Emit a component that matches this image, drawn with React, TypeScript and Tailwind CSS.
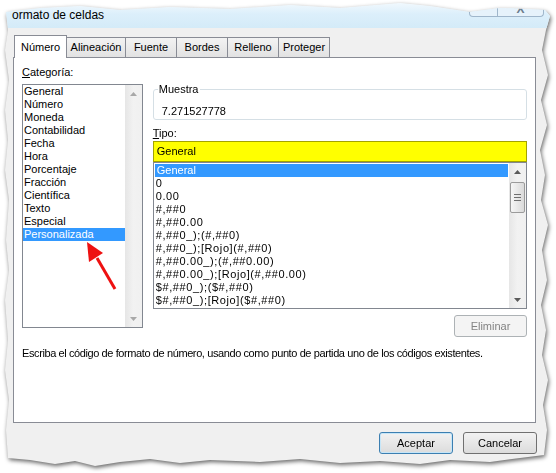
const cats = [
  'General',
  'Número',
  'Moneda',
  'Contabilidad',
  'Fecha',
  'Hora',
  'Porcentaje',
  'Fracción',
  'Científica',
  'Texto',
  'Especial',
  'Personalizada',
]

const tipos = [
  'General',
  '0',
  '0.00',
  '#,##0',
  '#,##0.00',
  '#,##0_);(#,##0)',
  '#,##0_);[Rojo](#,##0)',
  '#,##0.00_);(#,##0.00)',
  '#,##0.00_);[Rojo](#,##0.00)',
  '$#,##0_);($#,##0)',
  '$#,##0_);[Rojo]($#,##0)',
]

const tabs = [
  { label: 'Número', w: 'w-[53px]' },
  { label: 'Alineación', w: 'w-[60px]' },
  { label: 'Fuente', w: 'w-[52px]' },
  { label: 'Bordes', w: 'w-[52px]' },
  { label: 'Relleno', w: 'w-[52px]' },
  { label: 'Proteger', w: 'w-[52px]' },
]

function Arrow({ up, dim }: { up?: boolean; dim?: boolean }) {
  return (
    <div className="flex h-[17px] items-center justify-center">
      <svg width="7" height="4" viewBox="0 0 7 4">
        <polygon
          points={up ? '3.5,0 7,4 0,4' : '0,0 7,0 3.5,4'}
          fill={dim ? '#a8a8a8' : '#5a5a5a'}
        />
      </svg>
    </div>
  )
}

function ScrollBar({ thumb }: { thumb?: boolean }) {
  return (
    <div className="flex w-[17px] flex-col bg-linear-to-r from-[#e6e6e6] via-[#f2f2f2] to-[#f0f0f0]">
      <Arrow up dim={!thumb} />
      {thumb ? (
        <div className="mx-[1px] mt-[2px] flex h-[31px] flex-col items-center justify-center gap-[2px] rounded-[2px] border border-[#9b9b9b] bg-linear-to-r from-[#f6f6f6] to-[#dadada]">
          <div className="h-px w-[7px] bg-[#6f6f6f]" />
          <div className="h-px w-[7px] bg-[#6f6f6f]" />
          <div className="h-px w-[7px] bg-[#6f6f6f]" />
        </div>
      ) : null}
      <div className="flex-1" />
      <Arrow dim={!thumb} />
    </div>
  )
}

export default function App() {
  return (
    <div className="relative h-[473px] w-[556px] overflow-hidden bg-white font-['Liberation_Sans',Arial,sans-serif] text-[11px] text-black">
      <div className="drop-shadow-[1px_2px_2px_rgba(0,0,0,0.6)]">
        <div className="flex h-[473px] flex-col bg-[#f0f0f0] [clip-path:polygon(6px_12px,40px_8px,80px_6px,120px_10px,170px_7px,230px_9px,290px_5px,340px_8px,400px_3px,430px_6px,470px_12px,500px_8px,545px_10px,550px_16px,546px_30px,542px_50px,548px_75px,541px_100px,547px_125px,540px_150px,545px_175px,541px_200px,548px_225px,542px_250px,547px_280px,541px_305px,546px_330px,542px_355px,548px_380px,543px_405px,547px_430px,544px_455px,520px_458px,490px_462px,450px_460px,420px_464px,380px_461px,340px_463px,300px_459px,260px_462px,210px_460px,180px_463px,150px_459px,120px_462px,95px_466px,75px_461px,55px_464px,30px_460px,8px_458px,6px_430px,9px_400px,5px_370px,8px_340px,5px_300px,9px_270px,6px_240px,9px_200px,5px_170px,8px_140px,5px_110px,9px_80px,5px_50px,8px_30px)]">
          {/* title bar */}
          <div className="flex h-[28px] justify-between bg-linear-to-b from-[#f6fbfe] via-[#dceffb] to-[#d4ebf8]">
            <div className="pl-[12px] pt-[8px] text-[12px] leading-[14px]">ormato de celdas</div>
            <div className="mr-[12px] mt-[2px] flex h-[15px] rounded-b-[4px] border border-t-0 border-[#9fb6cb] bg-[#e6f2fb]">
              <div className="w-[28px] border-r border-[#9fb6cb]" />
              <div className="flex w-[45px] items-center justify-center text-[12px] font-bold leading-none text-[#6d7d8e]">X</div>
            </div>
          </div>

          {/* body */}
          <div className="flex flex-1 flex-col pl-[13px] pt-[7px]">
            <div className="flex h-[22px] items-end pl-[1px]">
              {tabs.map((t, i) =>
                i === 0 ? (
                  <div
                    key={t.label}
                    className={`relative z-10 -mb-px flex h-[23px] items-center justify-center border border-b-0 border-[#898c95] bg-white ${t.w}`}
                  >
                    {t.label}
                  </div>
                ) : (
                  <div
                    key={t.label}
                    className={`-ml-px flex h-[20px] items-center justify-center border border-b-0 border-[#898c95] bg-linear-to-b from-[#f3f3f3] to-[#e2e2e2] ${t.w}`}
                  >
                    {t.label}
                  </div>
                ),
              )}
            </div>

            <div className="flex h-[366px] w-[523px] flex-col border border-[#898c95] bg-white px-[8px] pt-[8px]">
              <div className="flex gap-[10px]">
                <div className="flex w-[121px] flex-col">
                  <div className="leading-[13px]">
                    <span className="underline">C</span>ategoría:
                  </div>
                  <div className="mt-[5px] flex h-[244px] border border-[#828790]">
                    <div className="flex-1">
                      {cats.map((c) => (
                        <div
                          key={c}
                          className={
                            c === 'Personalizada'
                              ? 'h-[13px] bg-[#3399ff] px-[1px] leading-[13px] text-white'
                              : 'h-[13px] px-[1px] leading-[13px]'
                          }
                        >
                          {c}
                        </div>
                      ))}
                    </div>
                    <ScrollBar />
                  </div>
                </div>

                <div className="flex w-[375px] flex-col">
                  <fieldset className="mt-[17px] rounded-[3px] border border-[#d5dfe5] px-[8px] pb-[1px]">
                    <legend className="-ml-[4px] px-[1px] leading-[13px]">Muestra</legend>
                    <div className="pt-[9px] leading-[13px]">7.271527778</div>
                  </fieldset>
                  <div className="mt-[7px] leading-[13px]">
                    <span className="underline">T</span>ipo:
                  </div>
                  <div className="mt-[1px] h-[21px] border border-[#a3a300] bg-[#ffff00] pl-[3px] leading-[19px]">General</div>
                  <div className="flex h-[147px] border border-[#828790]">
                    <div className="flex-1 px-[1px] pt-[1px]">
                      {tipos.map((t, i) => (
                        <div
                          key={t}
                          className={
                            i === 0
                              ? 'h-[13px] bg-[#3399ff] px-[2px] leading-[13px] text-white'
                              : 'h-[13px] px-[1px] leading-[13px] tracking-[0.6px]'
                          }
                        >
                          {t}
                        </div>
                      ))}
                    </div>
                    <ScrollBar thumb />
                  </div>
                  <div className="mt-[6px] flex h-[22px] w-[73px] items-center justify-center self-end rounded-[3px] border border-[#adb2b5] bg-[#f4f4f4] text-[#838383]">
                    Eliminar
                  </div>
                </div>
              </div>
              <div className="mt-[10px] leading-[13px] tracking-[-0.4px]">
                Escriba el código de formato de número, usando como punto de partida uno de los códigos existentes.
              </div>
            </div>

            <div className="mt-[9px] flex w-[524px] justify-end gap-[10px]">
              <div className="flex h-[22px] w-[74px] items-center justify-center rounded-[3px] border border-[#3c7fb1] bg-linear-to-b from-[#f2f2f2] to-[#dcdcdc] shadow-[inset_0_0_0_1px_#c6e6f8]">
                Aceptar
              </div>
              <div className="flex h-[22px] w-[74px] items-center justify-center rounded-[3px] border border-[#707070] bg-linear-to-b from-[#f2f2f2] to-[#dcdcdc]">
                Cancelar
              </div>
            </div>
          </div>
        </div>
      </div>

      {/* red annotation arrow */}
      <svg className="absolute left-0 top-0" width="556" height="473" viewBox="0 0 556 473">
        <line x1="115" y1="289" x2="97" y2="258" stroke="#ee1111" strokeWidth="3" />
        <polygon points="87,242 103,253 89,262" fill="#ee1111" />
      </svg>
    </div>
  )
}
